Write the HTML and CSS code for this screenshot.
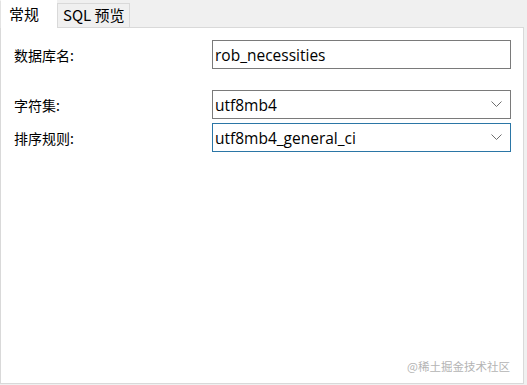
FILE: index.html
```html
<!DOCTYPE html>
<html lang="zh">
<head>
<meta charset="utf-8">
<link rel="stylesheet" href="styles.css">
</head>
<body>
<div class="tabs">
  <div class="tab active">常规</div>
  <div class="tab">SQL 预览</div>
</div>
<div class="panel">
  <div class="row">
    <label class="label">数据库名:</label>
    <div class="field">rob_necessities</div>
  </div>
  <div class="row row-gap">
    <label class="label">字符集:</label>
    <div class="field select">utf8mb4<span class="chev"><svg width="11" height="7" viewBox="0 0 11 7"><path d="M0.5 0.5 L5.5 5.5 L10.5 0.5" fill="none" stroke="#6e6e6e" stroke-width="1"/></svg></span></div>
  </div>
  <div class="row row-tight">
    <label class="label">排序规则:</label>
    <div class="field select focus">utf8mb4_general_ci<span class="chev"><svg width="11" height="7" viewBox="0 0 11 7"><path d="M0.5 0.5 L5.5 5.5 L10.5 0.5" fill="none" stroke="#6e6e6e" stroke-width="1"/></svg></span></div>
  </div>
  <div class="spacer"></div>
  <div class="watermark">@稀土掘金技术社区</div>
</div>
</body>
</html>
```
FILE: styles.css
```css
html, body {
  margin: 0;
  padding: 0;
  background: #f0f0f0;
  width: 527px;
  height: 385px;
  overflow: hidden;
  font-family: "Noto Sans CJK SC", "Noto Sans", sans-serif;
  color: #000;
}
.tabs {
  display: flex;
  align-items: flex-end;
  height: 27px;
  position: relative;
  z-index: 1;
}
.tab {
  box-sizing: border-box;
  font-size: 15px;
  line-height: 22px;
  padding: 0 4px 0 5px;
  height: 24px;
  background: #f0f0f0;
  border: 1px solid #d9d9d9;
  border-bottom: none;
}
.tab.active {
  background: #fff;
  height: 28px;
  width: 57px;
  padding: 2px 7px 0 8px;
  margin-bottom: -1px;
  border-color: #fff;
  border-left: 1px solid #e3e3e3;
}
.panel {
  box-sizing: border-box;
  background: #fff;
  border: 1px solid #d9d9d9;
  width: 524px;
  height: 357px;
  padding: 12px 0 0 13px;
  display: flex;
  flex-direction: column;
}
.row {
  display: flex;
  align-items: center;
}
.row-gap { margin-top: 21px; }
.row-tight { margin-top: 4px; }
.label {
  width: 198px;
  font-size: 14px;
}
.field {
  box-sizing: border-box;
  width: 299px;
  height: 29px;
  border: 1px solid #7a7a7a;
  font-family: "Open Sans", "Noto Sans", sans-serif;
  font-size: 15.5px;
  line-height: 26px;
  padding: 0 0 0 2px;
  display: flex;
  align-items: center;
}
.select { position: relative; }
.focus { border-color: #2b76a6; }
.chev {
  margin-left: auto;
  margin-right: 8px;
  display: flex;
  align-items: center;
}
.spacer { flex: 1; }
.watermark {
  align-self: flex-end;
  font-size: 11.5px;
  color: #b4b4b4;
  margin: 0 13px 9px 0;
}
```
